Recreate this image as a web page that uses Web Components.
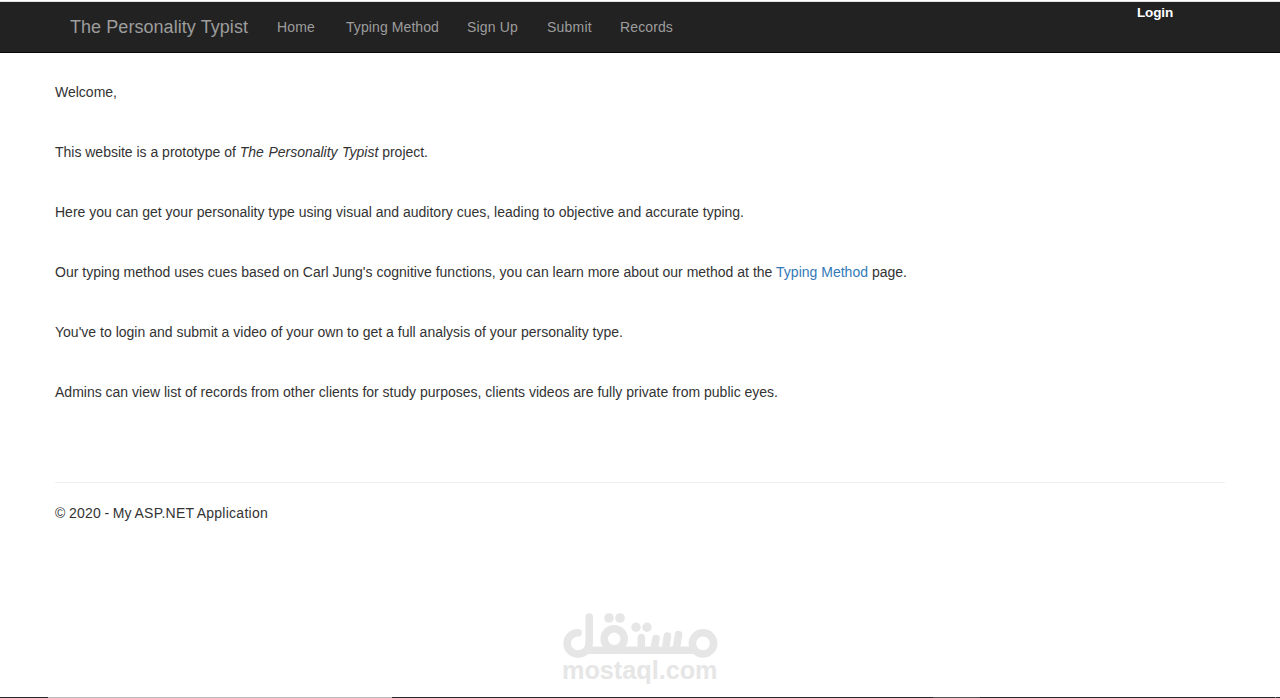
<!DOCTYPE html>
<html lang="en">
<head>
    <meta charset="UTF-8">
    <meta name="viewport" content="width=device-width, initial-scale=1.0">
    <title>The Personality Typist</title>
    <style>
        html, body {
            height: 100%;
            margin: 0;
        }
        body {
            background: #fff;
            color: #333;
            font: 14px/20px "Liberation Sans", Arial, sans-serif;
            overflow: hidden;
        }
        em {
            word-spacing: 0.7px;
        }
        a {
            color: #337ab7;
            text-decoration: none;
        }
    </style>
</head>
<body>
    <template id="page-tmpl">
        <style>
            :host {
                display: flex;
                flex-direction: column;
                height: 698px;
            }
            main {
                flex: 1;
                padding: 29px 55px 0;
            }
        </style>
        <slot name="nav"></slot>
        <main><slot></slot></main>
        <slot name="bottom"></slot>
    </template>

    <template id="nav-tmpl">
        <style>
            :host {
                display: flex;
                box-sizing: border-box;
                height: 53px;
                padding: 0 107px 0 70px;
                background: #222;
                border-top: 1px solid #fff;
                border-bottom: 1px solid #080808;
                box-shadow: inset 0 1px #dfe3e6;
                color: #9d9d9d;
            }
            .brand {
                width: 207px;
                font-size: 18px;
                line-height: 53px;
            }
            .links {
                display: flex;
                flex: 1;
            }
            .login {
                color: #fff;
                font-weight: bold;
                font-size: 13.5px;
                line-height: 23px;
            }
        </style>
        <div class="brand"><slot name="brand"></slot></div>
        <div class="links"><slot></slot></div>
        <div class="login"><slot name="login"></slot></div>
    </template>

    <site-page>
        <site-nav slot="nav">
            <fit-text slot="brand" w="178">The Personality Typist</fit-text>
            <nav-item w="38" gap="31">Home</nav-item>
            <nav-item w="93" gap="28">Typing Method</nav-item>
            <nav-item w="51" gap="29">Sign Up</nav-item>
            <nav-item w="45" gap="28">Submit</nav-item>
            <nav-item w="53" gap="0">Records</nav-item>
            <fit-text slot="login" w="36">Login</fit-text>
        </site-nav>

        <text-line w="62">Welcome,</text-line>
        <text-line w="373">This website is a prototype of <em>The Personality Typist</em> project.</text-line>
        <text-line w="689">Here you can get your personality type using visual and auditory cues, leading to objective and accurate typing.</text-line>
        <text-line w="852">Our typing method uses cues based on Carl Jung's cognitive functions, you can learn more about our method at the <a href="#">Typing Method</a> page.</text-line>
        <text-line w="568">You've to login and submit a video of your own to get a full analysis of your personality type.</text-line>
        <text-line w="723">Admins can view list of records from other clients for study purposes, clients videos are fully private from public eyes.</text-line>
        <site-footer><fit-text w="213">© 2020 - My ASP.NET Application</fit-text></site-footer>

        <mostaql-mark slot="bottom">mostaql.com</mostaql-mark>
        <task-edge slot="bottom"></task-edge>
    </site-page>
</body>
<script>
    // spreads the leftover width of a line over its letters
    function fit(el, inner) {
        const want = Number(el.getAttribute('w'));
        const count = el.textContent.length;
        inner.style.letterSpacing = (want - inner.getBoundingClientRect().width) / count + 'px';
    }

    customElements.define('site-page', class extends HTMLElement {
        connectedCallback() {
            this.attachShadow({mode: 'open'}).append(document.getElementById('page-tmpl').content.cloneNode(true));
        }
    });

    customElements.define('site-nav', class extends HTMLElement {
        connectedCallback() {
            this.attachShadow({mode: 'open'}).append(document.getElementById('nav-tmpl').content.cloneNode(true));
        }
    });

    customElements.define('site-footer', class extends HTMLElement {
        connectedCallback() {
            this.attachShadow({mode: 'open'});
            this.shadowRoot.innerHTML = `
              <style>
              :host {
                  display: block;
                  margin: 80px 0 0;
                  padding-top: 20px;
                  border-top: 1px solid #eee;
                  word-spacing: -0.8px;
              }
              </style>
              <slot></slot>
            `;
        }
    });

    customElements.define('fit-text', class extends HTMLElement {
        connectedCallback() {
            this.attachShadow({mode: 'open'});
            this.shadowRoot.innerHTML = `
              <style>
              :host { display: block; white-space: nowrap; }
              </style>
              <span><slot></slot></span>
            `;
            fit(this, this.shadowRoot.querySelector('span'));
        }
    });

    customElements.define('nav-item', class extends HTMLElement {
        connectedCallback() {
            this.attachShadow({mode: 'open'});
            this.shadowRoot.innerHTML = `
              <style>
              :host {
                  display: block;
                  width: ${this.getAttribute('w')}px;
                  margin-right: ${this.getAttribute('gap')}px;
                  line-height: 52px;
                  white-space: nowrap;
              }
              </style>
              <span><slot></slot></span>
            `;
            fit(this, this.shadowRoot.querySelector('span'));
        }
    });

    customElements.define('text-line', class extends HTMLElement {
        connectedCallback() {
            this.attachShadow({mode: 'open'});
            this.shadowRoot.innerHTML = `
              <style>
              :host { display: block; margin-bottom: 40px; white-space: nowrap; }
              </style>
              <span><slot></slot></span>
            `;
            fit(this, this.shadowRoot.querySelector('span'));
        }
    });

    customElements.define('mostaql-mark', class extends HTMLElement {
        connectedCallback() {
            this.attachShadow({mode: 'open'});
            this.shadowRoot.innerHTML = `
              <style>
              :host { display: flex; justify-content: center; height: 87px; }
              svg { display: block; }
              text { font: bold 25px "Liberation Sans", Arial, sans-serif; }
              </style>
              <svg width="160" height="87" viewBox="560 610 160 87" fill="#e6e6e6">
                <g fill="none" stroke="#e6e6e6" stroke-width="7.6" stroke-linecap="round">
                  <path d="M578 632.8A10.6 10.6 0 1 0 577.5 654C585 654 589.2 649 589.2 642V617"/>
                  <path d="M587 650.2H692"/>
                  <circle cx="614.2" cy="638.8" r="10"/>
                  <circle cx="703" cy="643.4" r="10.6"/>
                  <path d="M641.3 637.5V650M654 650L656 638.5M665.3 650L667.4 636M676 650L678.6 634.7"/>
                </g>
                <circle cx="609" cy="618" r="4.8"/><circle cx="620" cy="618" r="4.8"/>
                <circle cx="636" cy="627.2" r="4.7"/><circle cx="647" cy="627.2" r="4.7"/>
                <text x="562" y="678.5" textLength="155.5" lengthAdjust="spacingAndGlyphs"></text>
              </svg>
            `;
            this.shadowRoot.querySelector('text').textContent = this.textContent;
        }
    });

    // one pixel strip along the bottom of the window
    customElements.define('task-edge', class extends HTMLElement {
        connectedCallback() {
            this.attachShadow({mode: 'open'});
            this.shadowRoot.innerHTML = `
              <style>
              :host {
                  display: block;
                  height: 1px;
                  background: linear-gradient(to right, #27272a 48px, #bbb 48px 392px, #27272a 392px 933px, #555 933px 980px, #27272a 980px 1275px, #888 1275px 1276px, #27272a 1276px);
              }
              </style>
            `;
        }
    });
</script>
</html>
